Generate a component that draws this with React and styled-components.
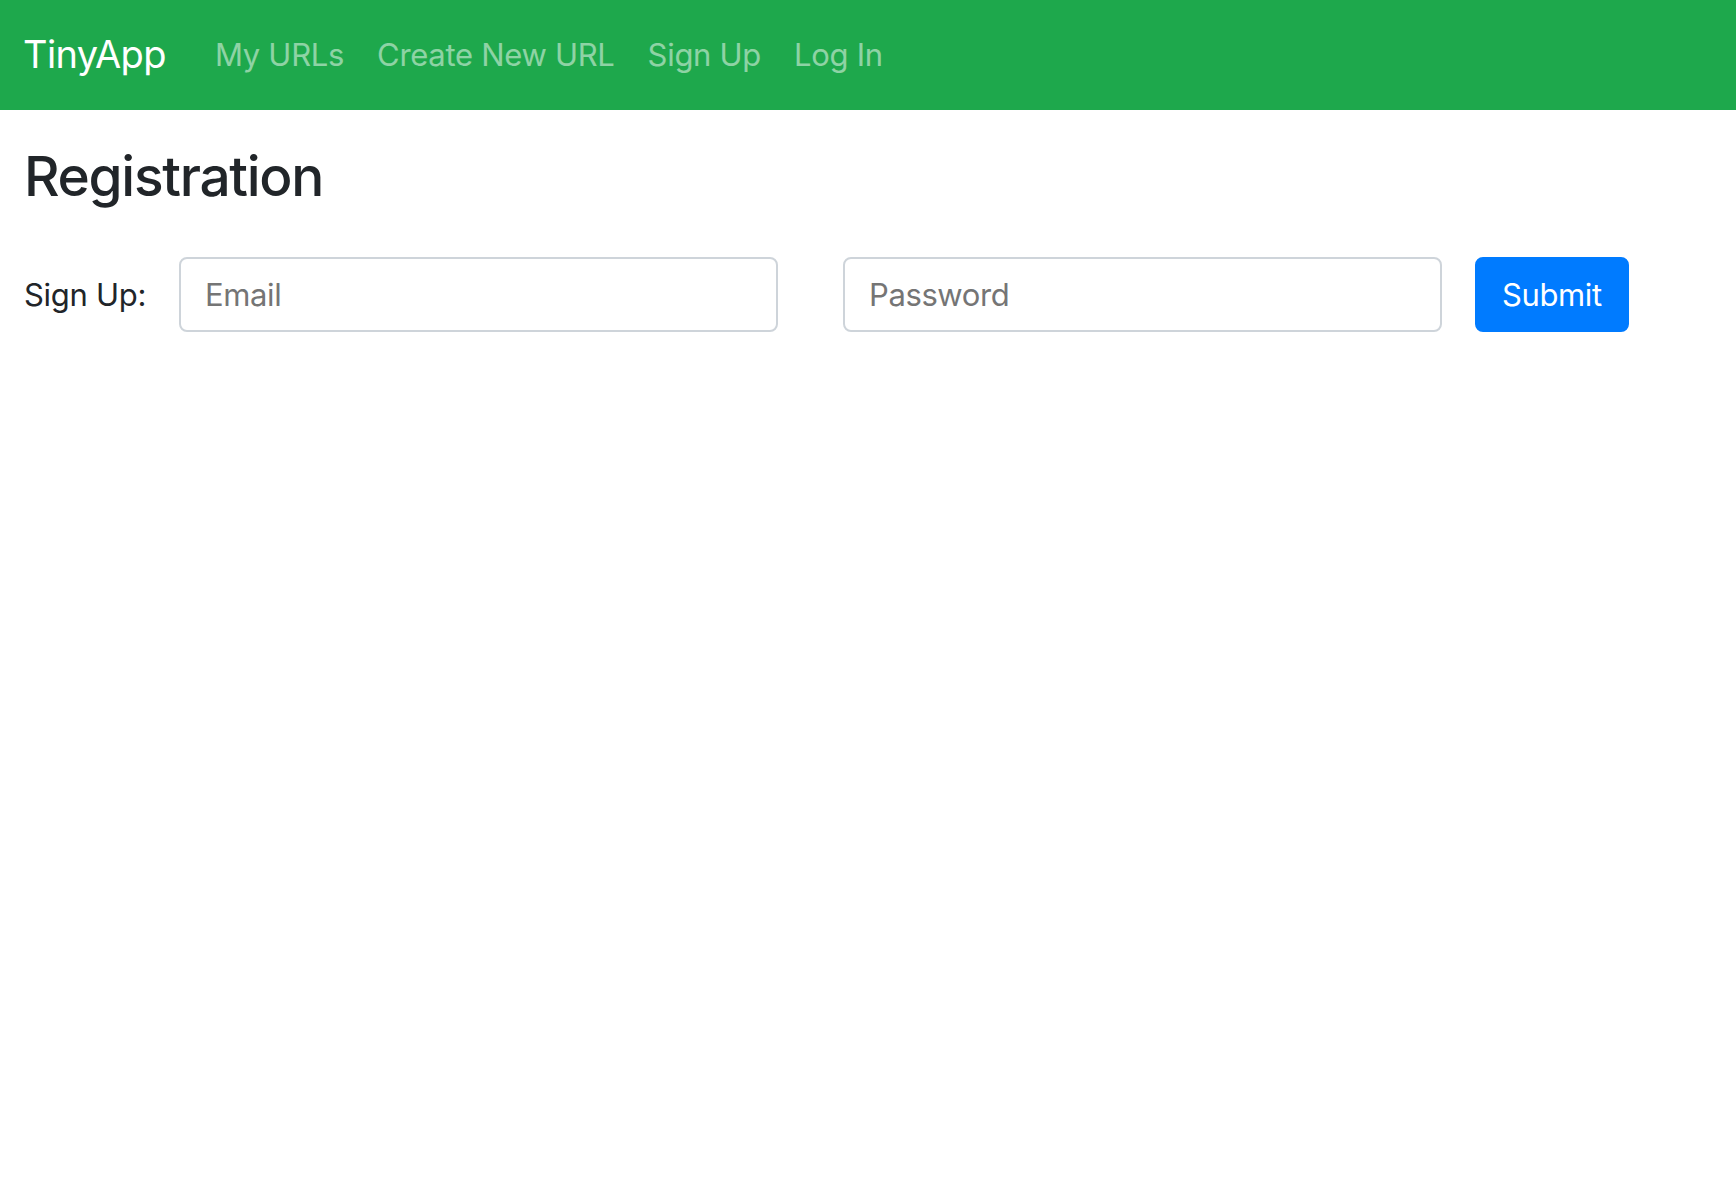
import React from "react";
import styled, { createGlobalStyle } from "styled-components";

const GlobalStyle = createGlobalStyle`
  html, body {
    margin: 0;
    padding: 0;
    background: #fff;
  }
  body {
    font-family: Inter, "Liberation Sans", sans-serif;
    color: #212529;
  }
  * {
    box-sizing: border-box;
  }
`;

const Navbar = styled.nav`
  display: flex;
  align-items: center;
  height: 110px;
  padding: 0 24px 2px 23px;
  background: #1ea84c;
`;

const Brand = styled.a`
  font-size: 38px;
  color: #fff;
  text-decoration: none;
  margin-right: 49px;
  letter-spacing: -0.6px;
`;

const NavList = styled.div`
  display: flex;
  align-items: center;
  gap: 33px;
`;

const NavLink = styled.a`
  font-size: 31px;
  color: rgba(255, 255, 255, 0.5);
  text-decoration: none;
  letter-spacing: -0.3px;
  cursor: pointer;
  :hover {
    color: rgba(255, 255, 255, 0.75);
  }
`;

const Main = styled.main`
  padding: 0 24px;
`;

const Heading = styled.h3`
  margin: 33px 0 48px;
  font-size: 55px;
  font-weight: 500;
  line-height: 1.2;
  letter-spacing: -1.3px;
`;

const Form = styled.form`
  display: flex;
  align-items: center;
`;

const Label = styled.label`
  font-size: 31px;
  letter-spacing: -0.3px;
  margin-right: 33px;
`;

const Input = styled.input`
  width: ${p => p.$width}px;
  height: 75px;
  margin-right: ${p => p.$gap}px;
  padding: 0 24px;
  font-family: inherit;
  font-size: 31px;
  letter-spacing: -0.4px;
  color: #495057;
  background: #fff;
  border: 2px solid #ced4da;
  border-radius: 8px;
  outline: none;
  ::placeholder {
    color: #6c757d;
  }
`;

const Button = styled.button`
  height: 75px;
  padding: 0 25px;
  font-family: inherit;
  font-size: 31px;
  letter-spacing: -0.4px;
  color: #fff;
  background: #007bff;
  border: 2px solid #007bff;
  border-radius: 8px;
  cursor: pointer;
`;

export default function App() {
  return (
    <>
      <GlobalStyle />
      <Navbar>
        <Brand href="#">TinyApp</Brand>
        <NavList>
          <NavLink>My URLs</NavLink>
          <NavLink>Create New URL</NavLink>
          <NavLink>Sign Up</NavLink>
          <NavLink>Log In</NavLink>
        </NavList>
      </Navbar>
      <Main>
        <Heading>Registration</Heading>
        <Form onSubmit={e => e.preventDefault()}>
          <Label htmlFor="email">Sign Up:</Label>
          <Input id="email" type="email" placeholder="Email" $width={599} $gap={65} />
          <Input type="password" placeholder="Password" $width={599} $gap={33} />
          <Button type="submit">Submit</Button>
        </Form>
      </Main>
    </>
  );
}
